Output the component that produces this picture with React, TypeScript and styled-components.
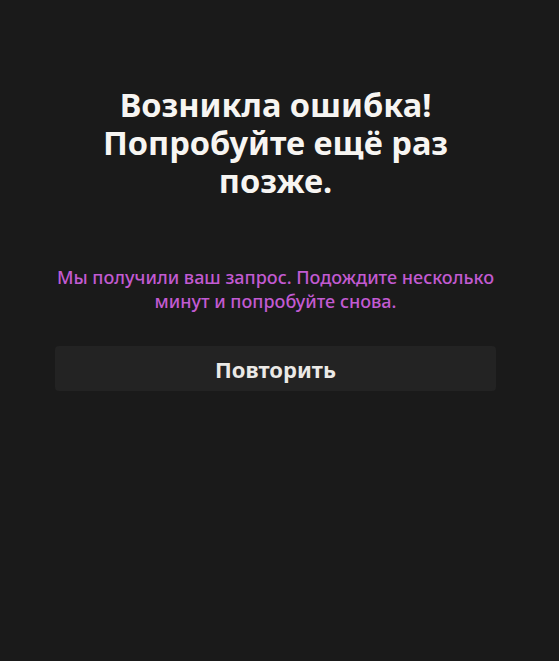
import { createGlobalStyle } from "styled-components";
import styled from "styled-components";

const GlobalStyle = createGlobalStyle`
  html, body {
    margin: 0;
    padding: 0;
    background-color: #1a1a1a;
  }
  body {
    font-family: "Noto Sans", "Open Sans", sans-serif;
    -webkit-font-smoothing: antialiased;
  }
`;

export default function App() {
  const handleRetry = () => {
    window.location.reload();
  };

  return (
    <>
      <GlobalStyle />
      <Page>
        <ErrorBox>
          <Title>
            Возникла ошибка!
            <br />
            Попробуйте ещё раз
            <br />
            позже.
          </Title>
          <Message>
            Мы получили ваш запрос. Подождите несколько минут и попробуйте снова.
          </Message>
          <RetryButton type="button" onClick={handleRetry}>
            Повторить
          </RetryButton>
        </ErrorBox>
      </Page>
    </>
  );
}

const Page = styled.div`
  box-sizing: border-box;
  min-height: 661px;
  padding: 86px 8px 0 0;
  display: flex;
  justify-content: center;
`;

const ErrorBox = styled.div`
  width: 441px;
  display: flex;
  flex-direction: column;
  align-items: stretch;
`;

const Title = styled.h1`
  margin: 0;
  font-size: 32.6px;
  line-height: 38px;
  font-weight: 700;
  color: #f7f5f2;
  text-align: center;
`;

const Message = styled.p`
  margin: 65px 0 0;
  font-size: 18px;
  line-height: 24px;
  font-weight: 500;
  color: #c25ad2;
  text-align: center;
`;

const RetryButton = styled.button`
  margin-top: 33px;
  height: 45px;
  border: none;
  border-radius: 4px;
  background-color: #232323;
  color: #ebe9e6;
  font-family: inherit;
  font-size: 22px;
  font-weight: 700;
  cursor: pointer;

  &:hover {
    background-color: #2a2a2a;
  }
`;
